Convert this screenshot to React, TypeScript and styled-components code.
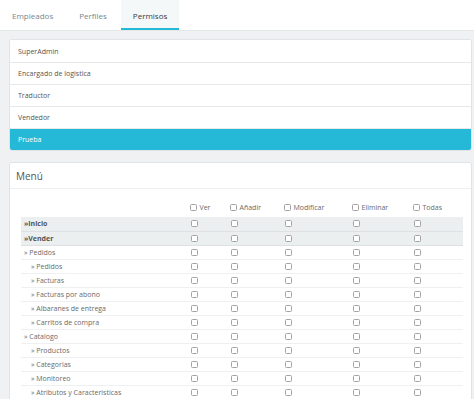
import React from "react";
import styled, { createGlobalStyle } from "styled-components";

const Global = createGlobalStyle`
  html, body { margin: 0; padding: 0; }
  body {
    background: #eff1f2;
    font-family: "Open Sans", "Noto Sans", sans-serif;
    color: #555;
    width: 474px;
    height: 399px;
    overflow: hidden;
  }
`;

const Page = styled.div`
  display: flex;
  flex-direction: column;
`;

const TabBar = styled.div`
  display: flex;
  gap: 2px;
  height: 30px;
  background: #fff;
  border-bottom: 1px solid #e4e7e8;
`;

const Tab = styled.div<{ $active?: boolean }>`
  display: flex;
  align-items: center;
  padding: 2px 12px 0;
  font-size: 8px;
  color: ${(p) => (p.$active ? "#363a41" : "#7a878c")};
  background: ${(p) => (p.$active ? "#f5f8f9" : "transparent")};
  border-bottom: 2px solid ${(p) => (p.$active ? "#25b9d7" : "transparent")};
`;

const Content = styled.div`
  display: flex;
  flex-direction: column;
  gap: 11px;
  padding: 8px 2px 0 9px;
`;

const List = styled.div`
  display: flex;
  flex-direction: column;
  background: #fff;
  border: 1px solid #e1e4e6;
  border-radius: 3px;
  overflow: hidden;
`;

const ListItem = styled.div<{ $active?: boolean; $first?: boolean }>`
  height: 22px;
  display: flex;
  align-items: center;
  padding-left: 8px;
  font-size: 7px;
  color: ${(p) => (p.$active ? "#fff" : "#555")};
  background: ${(p) => (p.$active ? "#25b9d7" : "#fff")};
  border-top: ${(p) => (p.$first ? "none" : "1px solid #e6e8ea")};
  box-sizing: border-box;
`;

const Panel = styled.div`
  background: #fff;
  border: 1px solid #e1e4e6;
  border-radius: 3px 3px 0 0;
  display: flex;
  flex-direction: column;
`;

const PanelHeader = styled.div`
  height: 25px;
  display: flex;
  align-items: center;
  padding-left: 6px;
  font-size: 10px;
  color: #555;
  border-bottom: 1px solid #eceeef;
`;

const PanelBody = styled.div`
  padding: 9px 8px 0 11px;
`;

const Table = styled.table`
  width: 442px;
  table-layout: fixed;
  border-collapse: collapse;
  font-size: 7px;
`;

const HeadCell = styled.th`
  height: 19px;
  padding: 0;
  text-align: left;
  font-weight: normal;
  color: #6a6a6a;
  vertical-align: middle;
`;

const HeadLabel = styled.label`
  display: flex;
  align-items: center;
  gap: 2.5px;
`;

const Row = styled.tr<{ $main?: boolean }>`
  height: 14px;
  background: ${(p) => (p.$main ? "#eceff0" : "#fff")};
  border-bottom: 1px solid ${(p) => (p.$main ? "#dde1e3" : "#eef0f1")};
`;

const LabelCell = styled.td<{ $main?: boolean; $level: number }>`
  padding: 0 0 0 ${(p) => 3 + p.$level * 7}px;
  font-weight: ${(p) => (p.$main ? 700 : 400)};
  color: ${(p) => (p.$main ? "#555" : "#6a6a6a")};
  white-space: nowrap;
  overflow: hidden;
`;

const BoxCell = styled.td`
  padding: 0 0 0 1px;
  vertical-align: middle;
`;

const Box = styled.span`
  display: block;
  width: 7px;
  height: 7px;
  border: 1px solid #a3a3a3;
  border-radius: 1.5px;
  background: #fff;
  box-sizing: border-box;
`;

const profiles = ["SuperAdmin", "Encargado de logistica", "Traductor", "Vendedor", "Prueba"];

const columns: { label: string; width: number }[] = [
  { label: "Ver", width: 40 },
  { label: "Añadir", width: 54 },
  { label: "Modificar", width: 68 },
  { label: "Eliminar", width: 61 },
  { label: "Todas", width: 50 },
];

const rows: { label: string; level: number; main?: boolean }[] = [
  { label: "»Inicio", level: 0, main: true },
  { label: "»Vender", level: 0, main: true },
  { label: "» Pedidos", level: 0 },
  { label: "» Pedidos", level: 1 },
  { label: "» Facturas", level: 1 },
  { label: "» Facturas por abono", level: 1 },
  { label: "» Albaranes de entrega", level: 1 },
  { label: "» Carritos de compra", level: 1 },
  { label: "» Catalogo", level: 0 },
  { label: "» Productos", level: 1 },
  { label: "» Categorias", level: 1 },
  { label: "» Monitoreo", level: 1 },
  { label: "» Atributos y Caracteristicas", level: 1 },
];

export default function App() {
  return (
    <Page>
      <Global />
      <TabBar>
        <Tab>Empleados</Tab>
        <Tab>Perfiles</Tab>
        <Tab $active>Permisos</Tab>
      </TabBar>
      <Content>
        <List>
          {profiles.map((p, i) => (
            <ListItem key={p} $active={p === "Prueba"} $first={i === 0}>
              {p}
            </ListItem>
          ))}
        </List>
        <Panel>
          <PanelHeader>Menú</PanelHeader>
          <PanelBody>
            <Table>
              <colgroup>
                <col style={{ width: 169 }} />
                {columns.map((c) => (
                  <col key={c.label} style={{ width: c.width }} />
                ))}
              </colgroup>
              <thead>
                <tr>
                  <HeadCell />
                  {columns.map((c) => (
                    <HeadCell key={c.label}>
                      <HeadLabel>
                        <Box />
                        {c.label}
                      </HeadLabel>
                    </HeadCell>
                  ))}
                </tr>
              </thead>
              <tbody>
                {rows.map((r, i) => (
                  <Row key={i} $main={r.main}>
                    <LabelCell $main={r.main} $level={r.level}>
                      {r.label}
                    </LabelCell>
                    {columns.map((c) => (
                      <BoxCell key={c.label}>
                        <Box />
                      </BoxCell>
                    ))}
                  </Row>
                ))}
              </tbody>
            </Table>
          </PanelBody>
        </Panel>
      </Content>
    </Page>
  );
}
